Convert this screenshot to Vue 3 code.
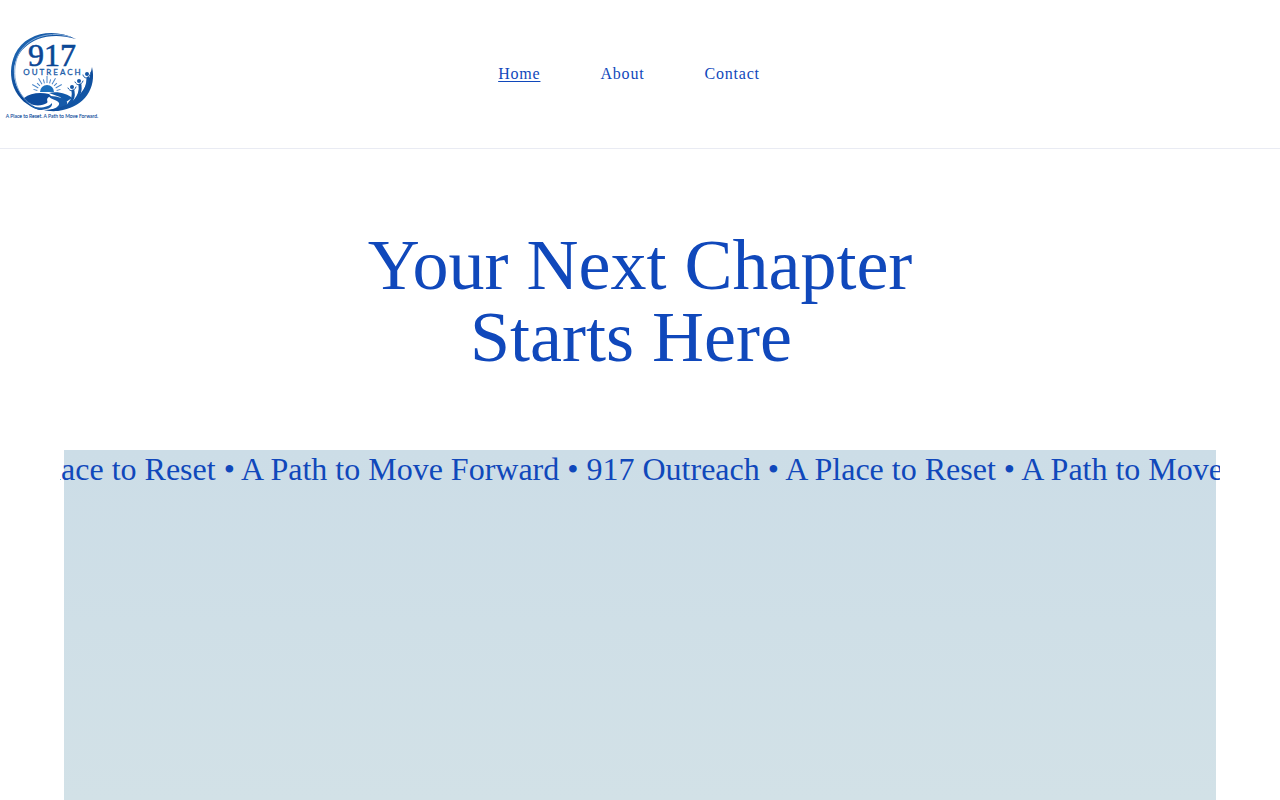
<script setup>
const links = [
  { label: 'Home', href: '#home', current: true },
  { label: 'About', href: '#about', current: false },
  { label: 'Contact', href: '#contact', current: false },
]
const phrase = 'A Place to Reset • A Path to Move Forward • 917 Outreach • '
const rays = [-75, -60, -45, -30, -15, 0, 15, 30, 45, 60, 75]
</script>

<template>
  <div class="page">
    <header class="header">
      <a class="brand" href="#home" aria-label="917 Outreach">
        <svg class="logo" viewBox="0 0 92 90" aria-hidden="true">
          <defs>
            <linearGradient id="ink" x1="0" y1="0" x2="1" y2="1">
              <stop offset="0" stop-color="#2470bb" />
              <stop offset="0.5" stop-color="#0b4796" />
              <stop offset="1" stop-color="#1b66b3" />
            </linearGradient>
          </defs>
          <path d="M70 10C47-2 19 4 9 25C-1 47 8 74 34 81C19 73 9 61 8 45C7 20 32-1 70 10Z" fill="url(#ink)" />
          <path d="M65 8C39 0 17 12 11 29C4 51 14 69 27 77" fill="none" stroke="#7fa9d8" stroke-width="1" />
          <text class="number" x="46" y="37" text-anchor="middle">917</text>
          <text class="word" x="47" y="46" text-anchor="middle">OUTREACH</text>
          <g stroke="#4a86c8" stroke-width="1">
            <line
              v-for="(angle, i) in rays"
              :key="angle"
              x1="41"
              :y1="54"
              x2="41"
              :y2="i % 2 ? 47 : 50"
              :transform="`rotate(${angle} 41 64)`"
            />
          </g>
          <path d="M34 63A7 7 0 0 1 48 63Z" fill="#1c70bd" />
          <path d="M18 69C24 64 34 63 43 65L45 67C38 70 43 72 41 74C36 77 28 78 22 73Z" fill="#0d4c9e" />
          <path d="M43 64C52 62 62 65 66 69L60 73L54 68Z" fill="#1159a9" />
          <path d="M43 67C47 67 59 68 61 73C63 78 52 82 41 82C49 80 54 77 53 74C52 71 43 70 43 67Z" fill="#155aa9" />
          <path d="M23 76C31 80 42 79 46 74C47 79 40 81 33 81C29 80 26 78 23 76Z" fill="#155aa9" />
          <path d="M86 38C91 59 78 77 57 81C49 83 42 82 38 81C62 80 81 67 86 38Z" fill="url(#ink)" />
          <g fill="#1356a5">
            <circle cx="66" cy="58" r="2" />
            <circle cx="73" cy="52" r="2" />
            <circle cx="81" cy="45" r="2" />
          </g>
          <g fill="none" stroke="#1356a5" stroke-linecap="round">
            <path d="M62 59C64 63 68 63 70 58M69 53C71 57 75 57 77 52M77 46C78 50 83 51 85 43" stroke-width="1" />
            <path d="M67 62C68 67 67 71 63 75M74 56C75 62 73 67 69 72M82 49C82 57 79 63 75 69" stroke-width="3" />
          </g>
          <text class="tagline" x="46" y="89" text-anchor="middle">A Place to Reset. A Path to Move Forward.</text>
        </svg>
      </a>
      <nav class="nav" aria-label="Main">
        <a
          v-for="link in links"
          :key="link.label"
          :href="link.href"
          :class="{ current: link.current }"
          :aria-current="link.current ? 'page' : undefined"
        >{{ link.label }}</a>
      </nav>
    </header>
    <main class="main">
      <h1 class="title">Your Next Chapter<br />Starts Here&nbsp;</h1>
      <section class="banner">
        <div class="marquee">
          <p class="track">{{ phrase + phrase }}</p>
        </div>
      </section>
    </main>
  </div>
</template>

<style>
body {
  margin: 0;
  background: #fff;
}
</style>

<style scoped>
.page {
  height: 100vh;
  display: flex;
  flex-direction: column;
  overflow: hidden;
  color: #1048bb;
  font-family: "Liberation Serif", "Times New Roman", serif;
}
.header {
  display: grid;
  grid-template-columns: 1fr auto 1fr;
  align-items: center;
  padding: 29px 28px 29px 6px;
  border-bottom: 1px solid #e9ebf3;
}
.brand {
  justify-self: start;
}
.logo {
  display: block;
  width: 92px;
  height: 90px;
  overflow: visible;
}
.number {
  font-family: "Liberation Serif", serif;
  font-size: 32px;
  fill: #0b4796;
  stroke: #0b4796;
  stroke-width: 0.6;
}
.word {
  font-family: Lato, sans-serif;
  font-size: 8px;
  font-weight: 400;
  letter-spacing: 2px;
  fill: #1b5ca8;
  stroke: #1b5ca8;
  stroke-width: 0.3;
}
.tagline {
  font-family: Lato, sans-serif;
  font-size: 5px;
  font-weight: 400;
  fill: #15509d;
  stroke: #15509d;
  stroke-width: 0.1;
}
.nav {
  display: flex;
  gap: 60px;
  font-size: 16px;
  line-height: 24px;
  letter-spacing: 0.05em;
}
.nav a {
  color: inherit;
  text-decoration: none;
}
.nav .current {
  text-decoration: underline;
  text-underline-offset: 2px;
}
.main {
  flex: 1;
  display: flex;
  flex-direction: column;
  padding: 80px 64px 0;
}
.title {
  margin: 0 0 77px;
  font-size: 72px;
  font-weight: 400;
  line-height: 72px;
  text-align: center;
}
.banner {
  flex: 1;
  background: linear-gradient(#ccdde7, #d2e1e7);
}
.marquee {
  margin: 0 -4px;
  overflow: hidden;
}
.track {
  margin: 0 0 0 -55px;
  font-size: 32px;
  line-height: 38px;
  white-space: nowrap;
}
</style>
